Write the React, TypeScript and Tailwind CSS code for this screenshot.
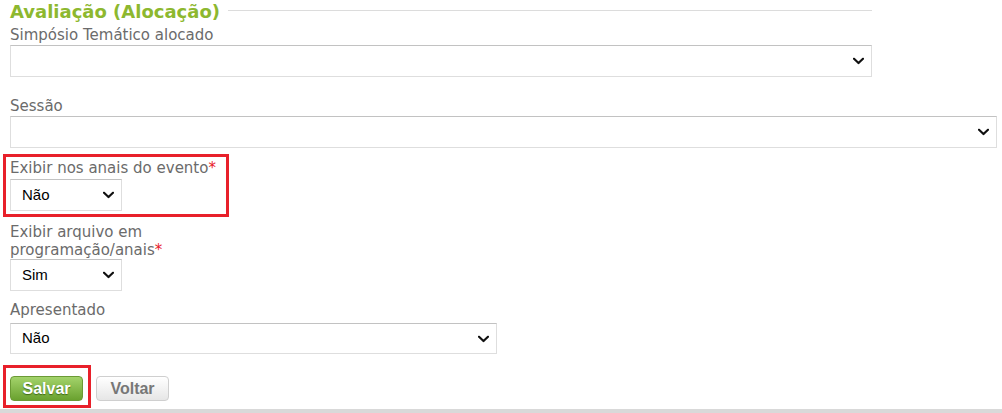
import React from "react";

const labelCls =
  "block text-[15px] leading-[18px] text-[#6b6b6b] font-['DejaVu_Sans',Verdana,sans-serif]";

function Chevron() {
  return (
    <svg
      width="11"
      height="7"
      viewBox="0 0 11 7"
      className="pointer-events-none absolute right-[7px] top-1/2 -translate-y-1/2"
    >
      <path d="M1 1.2 L5.5 5.5 L10 1.2" fill="none" stroke="#111" strokeWidth="2.2" strokeLinecap="square" />
    </svg>
  );
}

function Select({
  value,
  className,
}: {
  value?: string;
  className: string;
}) {
  return (
    <div
      className={
        "relative flex items-center border border-[#dedede] border-t-[#c2c2c2] bg-white " +
        className
      }
    >
      <span className="pl-[11px] text-[15px] text-black font-['Liberation_Sans',Arial,sans-serif]">
        {value ?? ""}
      </span>
      <Chevron />
    </div>
  );
}

function Star() {
  return <span className="text-[#e8202a]">*</span>;
}

export default function App() {
  return (
    <div className="w-[1002px] h-[413px] overflow-hidden bg-white">
      <div className="pl-[10px]">
        {/* Header */}
        <div className="flex w-[862px] h-[24px]">
          <h2 className="text-[18px] leading-[24px] font-bold text-[#8db82f] font-['DejaVu_Sans',Verdana,sans-serif] whitespace-nowrap">
            Avaliação (Alocação)
          </h2>
          <div className="flex-1 ml-[8px] mt-[10px] h-px bg-[#dcdcdc]" />
        </div>

        <label className={labelCls + " mt-[2px]"}>Simpósio Temático alocado</label>
        <Select className="w-[862px] h-[32px] mt-[1px]" />

        <label className={labelCls + " mt-[20px]"}>Sessão</label>
        <Select className="w-[987px] h-[32px] mt-[1px]" />

        <div className="relative w-[215px] mt-[11px]">
          <div className="absolute left-[-7px] top-[-5px] w-[226px] h-[63px] border-[3px] border-[#e8202a]" />
          <label className={labelCls + " whitespace-nowrap"}>
            Exibir nos anais do evento
            <Star />
          </label>
          <Select value="Não" className="w-[112px] h-[32px] mt-[2px]" />
        </div>

        <div className="w-[215px] mt-[12px]">
          <label className={labelCls}>
            Exibir arquivo em programação/anais
            <Star />
          </label>
          <Select value="Sim" className="w-[112px] h-[32px]" />
        </div>

        <label className={labelCls + " mt-[10px]"}>Apresentado</label>
        <Select value="Não" className="w-[487px] h-[31px] mt-[4px]" />

        <div className="relative flex gap-[13px] mt-[22px]">
          <div className="absolute left-[-7px] top-[-11px] w-[88px] h-[43px] border-[3px] border-[#e8202a]" />
          <button className="w-[73px] h-[25px] rounded-[4px] border border-[#6b9a35] bg-[linear-gradient(#a3d36b,#6aa12f)] text-white text-[16px] font-bold leading-none font-['Liberation_Sans',Arial,sans-serif] [text-shadow:0_1px_1px_#3f6a15]">
            Salvar
          </button>
          <button className="w-[73px] h-[25px] rounded-[4px] border border-[#cfcfcf] bg-[linear-gradient(#ffffff,#e6e6e6)] text-[#777] text-[16px] font-bold leading-none font-['Liberation_Sans',Arial,sans-serif]">
            Voltar
          </button>
        </div>
      </div>
      <div className="mt-[8px] h-[5px] bg-[#d9d9d9]" />
    </div>
  );
}
